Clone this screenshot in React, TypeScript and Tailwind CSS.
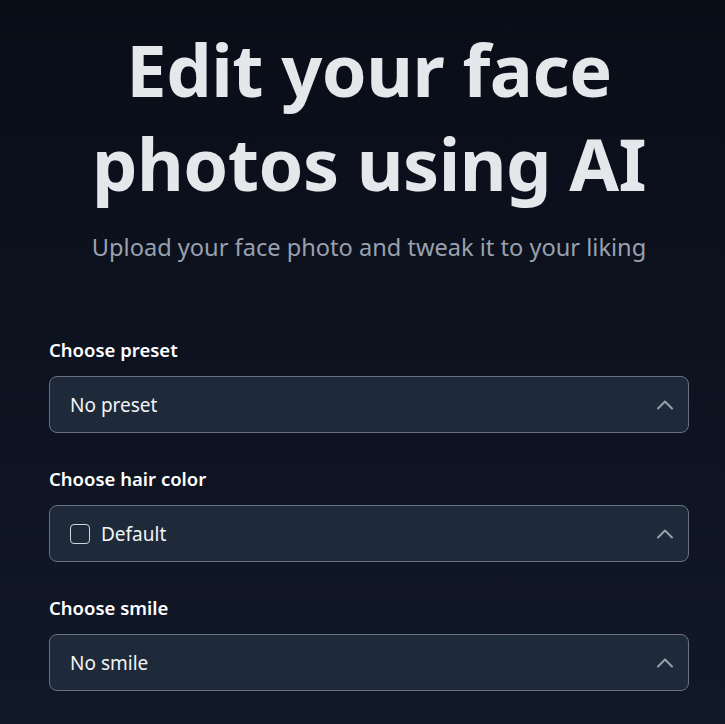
const fields = [
  { label: "Choose preset", value: "No preset", swatch: false },
  { label: "Choose hair color", value: "Default", swatch: true },
  { label: "Choose smile", value: "No smile", swatch: false },
];

function Chevron() {
  return (
    <svg width="18" height="11" viewBox="0 0 18 11" fill="none" className="text-gray-400">
      <path d="M2 9.5 9 2.5l7 7" stroke="currentColor" strokeWidth="2" strokeLinecap="round" strokeLinejoin="round" />
    </svg>
  );
}

function SelectBox({ value, swatch }: { value: string; swatch: boolean }) {
  return (
    <button
      type="button"
      className="flex h-[57px] w-full items-center justify-between rounded-lg border border-gray-500 bg-gray-800 pl-5 pr-[14px] text-left text-[19px] text-gray-100"
    >
      <span className="flex items-center gap-[11px]">
        {swatch && <span className="h-5 w-5 rounded-[4px] border-[1.5px] border-gray-300" />}
        {value}
      </span>
      <Chevron />
    </button>
  );
}

export default function App() {
  return (
    <div
      className="min-h-screen bg-gradient-to-b from-[#090d18] to-[#111827] pb-10"
      style={{ fontFamily: '"Noto Sans", "Open Sans", sans-serif' }}
    >
      <div className="ml-[49px] w-[640px]">
        <h1 className="pt-[22px] text-center text-[72px] font-bold leading-[94px] tracking-[-0.5px] text-gray-200">
          Edit your face
          <br />
          photos using AI
        </h1>
        <p className="mt-[20px] text-center text-[23.6px] text-gray-400">
          Upload your face photo and tweak it to your liking
        </p>

        <div className="mt-[73px] flex flex-col gap-[34px]">
          {fields.map((f) => (
            <div key={f.label} className="flex flex-col gap-[14px]">
              <label className="text-[18.5px] font-semibold leading-6 text-white">{f.label}</label>
              <SelectBox value={f.value} swatch={f.swatch} />
            </div>
          ))}
        </div>
      </div>
    </div>
  );
}
